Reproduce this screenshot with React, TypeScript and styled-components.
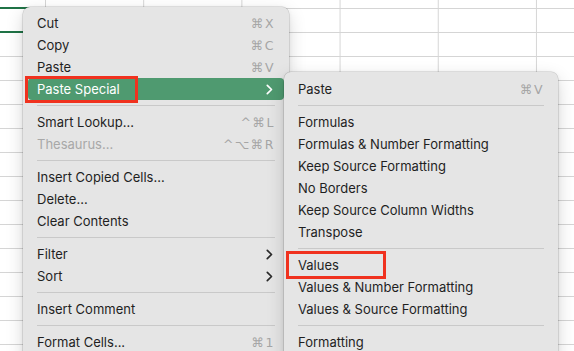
import styled, { createGlobalStyle } from "styled-components"

const GlobalStyle = createGlobalStyle`
  html, body {
    margin: 0;
    padding: 0;
    overflow: hidden;
    background: #fff;
  }
  body {
    font-family: Inter, "Noto Sans", "DejaVu Sans", sans-serif;
    -webkit-font-smoothing: antialiased;
  }
`

type Entry =
  | { kind: "sep" }
  | { kind: "item"; label: string; shortcut?: string; sub?: boolean; disabled?: boolean; active?: boolean; callout?: boolean }

const mainItems: Entry[] = [
  { kind: "item", label: "Cut", shortcut: "⌘X" },
  { kind: "item", label: "Copy", shortcut: "⌘C" },
  { kind: "item", label: "Paste", shortcut: "⌘V" },
  { kind: "item", label: "Paste Special", sub: true, active: true, callout: true },
  { kind: "sep" },
  { kind: "item", label: "Smart Lookup...", shortcut: "^⌘L" },
  { kind: "item", label: "Thesaurus...", shortcut: "^⌥⌘R", disabled: true },
  { kind: "sep" },
  { kind: "item", label: "Insert Copied Cells..." },
  { kind: "item", label: "Delete..." },
  { kind: "item", label: "Clear Contents" },
  { kind: "sep" },
  { kind: "item", label: "Filter", sub: true },
  { kind: "item", label: "Sort", sub: true },
  { kind: "sep" },
  { kind: "item", label: "Insert Comment" },
  { kind: "sep" },
  { kind: "item", label: "Format Cells...", shortcut: "⌘1" },
]

const subItems: Entry[] = [
  { kind: "item", label: "Paste", shortcut: "⌘V" },
  { kind: "sep" },
  { kind: "item", label: "Formulas" },
  { kind: "item", label: "Formulas & Number Formatting" },
  { kind: "item", label: "Keep Source Formatting" },
  { kind: "item", label: "No Borders" },
  { kind: "item", label: "Keep Source Column Widths" },
  { kind: "item", label: "Transpose" },
  { kind: "sep" },
  { kind: "item", label: "Values", callout: true },
  { kind: "item", label: "Values & Number Formatting" },
  { kind: "item", label: "Values & Source Formatting" },
  { kind: "sep" },
  { kind: "item", label: "Formatting" },
]

const Chevron = () => (
  <svg width="7" height="11" viewBox="0 0 7 11">
    <path d="M1.3 1.3 L5.5 5.5 L1.3 9.7" fill="none" stroke="currentColor" strokeWidth="1.7" strokeLinecap="round" strokeLinejoin="round" />
  </svg>
)

const MenuList = ({ items, callout }: { items: Entry[]; callout: { left: number; top: number; width: number; height: number } }) => (
  <>
    {items.map((it, i) =>
      it.kind === "sep" ? (
        <Separator key={i} />
      ) : (
        <Item key={i} $active={it.active} $disabled={it.disabled}>
          <Label>{it.label}</Label>
          {it.shortcut && <Shortcut $active={it.active}>{it.shortcut}</Shortcut>}
          {it.sub && <Arrow $active={it.active}><Chevron /></Arrow>}
          {it.callout && <Callout $left={callout.left} $top={callout.top} $width={callout.width} $height={callout.height} />}
        </Item>
      )
    )}
  </>
)

const App = () => {
  return (
    <Sheet>
      <GlobalStyle />
      <Selection />
      <MainMenu>
        <MenuList items={mainItems} callout={{ left: -3, top: -2, width: 113, height: 27 }} />
      </MainMenu>
      <SubMenu>
        <MenuList items={subItems} callout={{ left: -3, top: -3, width: 100, height: 28 }} />
      </SubMenu>
    </Sheet>
  )
}

export default App

const Sheet = styled.div`
  position: relative;
  width: 574px;
  height: 351px;
  overflow: hidden;
  background-color: #ffffff;
  background-image:
    linear-gradient(to right, #d5d5d5 1px, transparent 1px),
    linear-gradient(to bottom, #d5d5d5 1px, transparent 1px);
  background-size: 98.2px 24px;
  background-position: 45px 8px;
`

const Selection = styled.div`
  position: absolute;
  left: -60px;
  top: 7px;
  width: 106px;
  height: 26px;
  box-sizing: border-box;
  border: 2px solid #1f7346;
`

const MenuBase = styled.div`
  position: absolute;
  box-sizing: border-box;
  display: flex;
  flex-direction: column;
  background: #e5e5e5;
  border-radius: 7px;
  box-shadow:
    0 0 0 0.5px rgba(0, 0, 0, 0.18),
    0 6px 18px rgba(0, 0, 0, 0.16),
    0 1px 4px rgba(0, 0, 0, 0.08);
  font-size: 13px;
  color: #1f1f1f;
`

const MainMenu = styled(MenuBase)`
  left: 23px;
  top: 7px;
  width: 266px;
  padding: 5px 5px 10px;
`

const SubMenu = styled(MenuBase)`
  left: 284px;
  top: 72px;
  width: 274px;
  padding: 6px 5px 10px;
`

const Item = styled.div<{ $active?: boolean; $disabled?: boolean }>`
  position: relative;
  display: flex;
  align-items: center;
  height: 22px;
  padding: 0 10px 0 9px;
  border-radius: 4px;
  background: ${(p) => (p.$active ? "#4f9a70" : "transparent")};
  color: ${(p) => (p.$active ? "#ffffff" : p.$disabled ? "#a8a8a8" : "#1f1f1f")};
  white-space: nowrap;
`

const Label = styled.span`
  flex: 1;
`

const Shortcut = styled.span<{ $active?: boolean }>`
  color: ${(p) => (p.$active ? "#ffffff" : "#a6a6a6")};
  font-family: "DejaVu Sans", Inter, sans-serif;
  font-size: 12.5px;
  letter-spacing: 1.5px;
  margin-right: -1px;
`

const Arrow = styled.span<{ $active?: boolean }>`
  display: flex;
  align-items: center;
  margin-right: 1px;
  color: ${(p) => (p.$active ? "#ffffff" : "#2a2a2a")};
`

const Callout = styled.div<{ $left: number; $top: number; $width: number; $height: number }>`
  position: absolute;
  left: ${(p) => p.$left}px;
  top: ${(p) => p.$top}px;
  width: ${(p) => p.$width}px;
  height: ${(p) => p.$height}px;
  box-sizing: border-box;
  border: 3px solid #f0321f;
  pointer-events: none;
`

const Separator = styled.div`
  height: 11px;
  margin: 0 9px;
  display: flex;
  align-items: center;
  &::after {
    content: "";
    flex: 1;
    height: 1px;
    background: #c9c9c9;
  }
`
